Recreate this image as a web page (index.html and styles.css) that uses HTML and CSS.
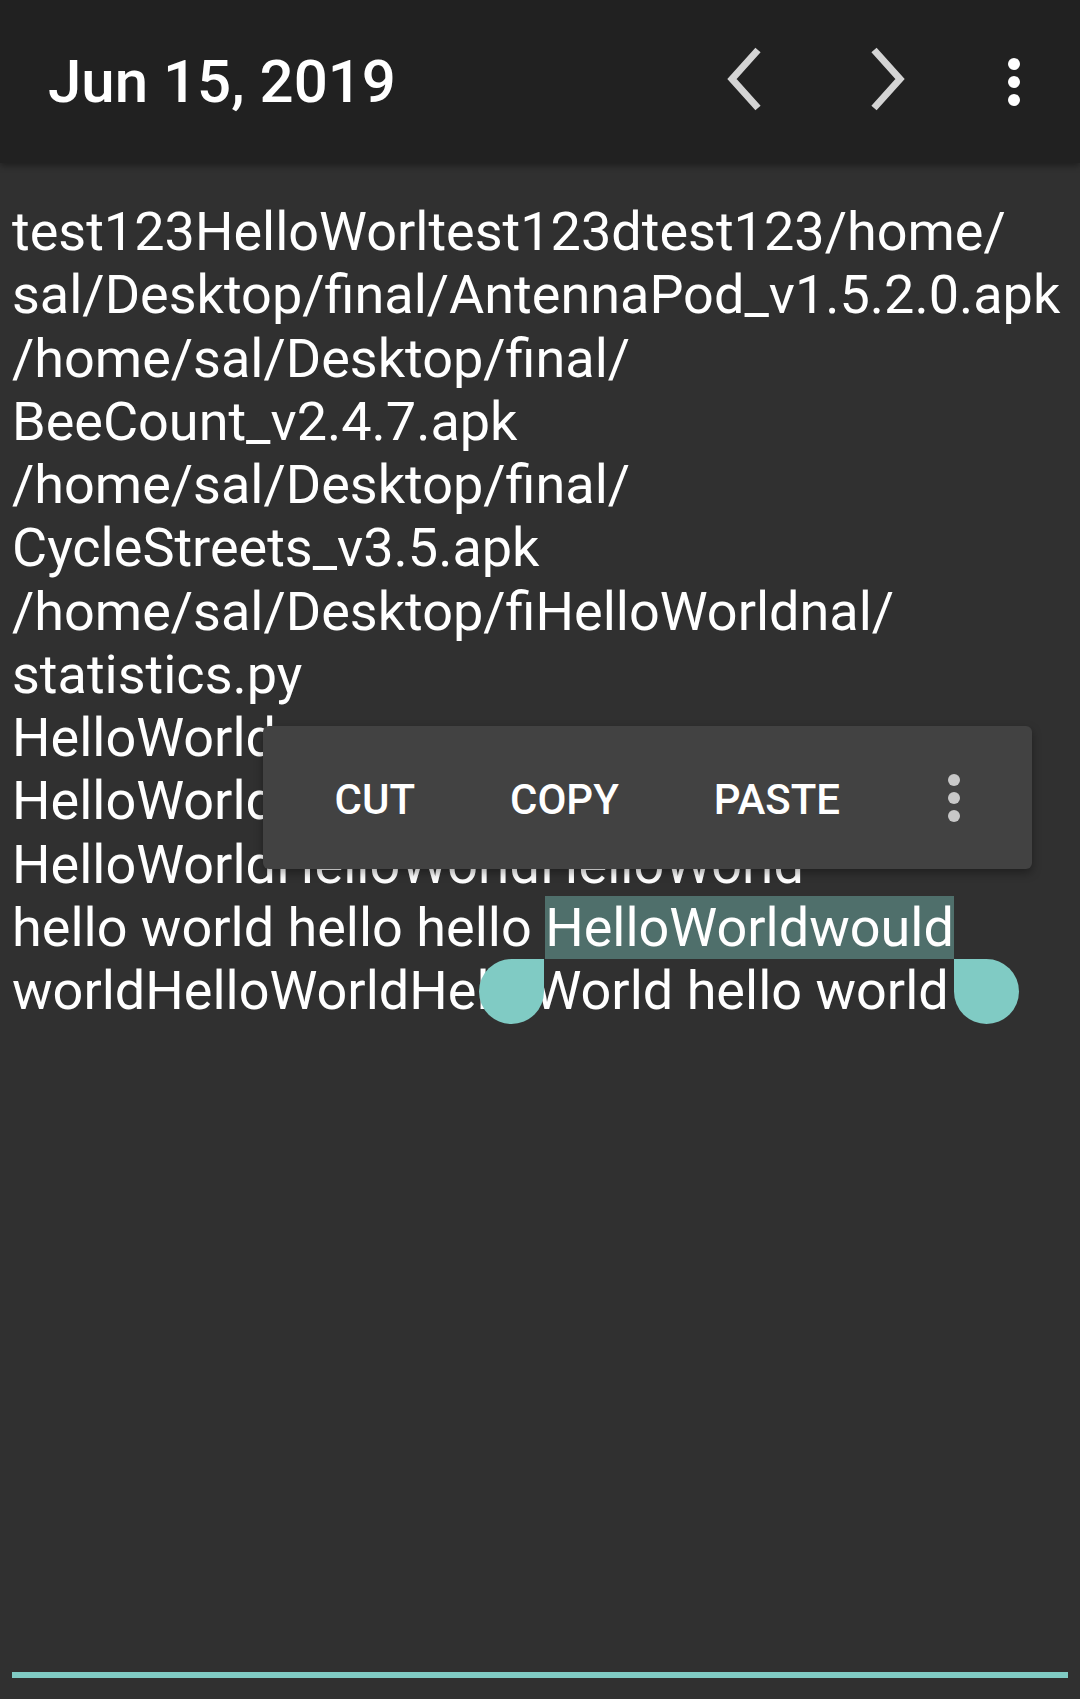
FILE: index.html
```html
<!DOCTYPE html>
<html lang="en">
<head>
<meta charset="utf-8">
<title>Jun 15, 2019</title>
<link rel="stylesheet" href="styles.css">
</head>
<body>
<div class="app">
  <header class="toolbar">
    <h1 class="title">Jun 15, 2019</h1>
    <div class="actions">
      <button class="action" aria-label="Previous">
        <svg class="chevron" width="40" height="66" viewBox="0 0 40 66"><polyline points="34,4 8,33 34,62" fill="none" stroke="#d4d4d4" stroke-width="7" stroke-linejoin="miter"/></svg>
      </button>
      <button class="action" aria-label="Next">
        <svg class="chevron" width="40" height="66" viewBox="0 0 40 66"><polyline points="6,4 32,33 6,62" fill="none" stroke="#d4d4d4" stroke-width="7" stroke-linejoin="miter"/></svg>
      </button>
      <button class="action action-overflow" aria-label="More options">
        <svg width="12" height="48" viewBox="0 0 12 48"><circle cx="6" cy="6" r="6" fill="#fff"/><circle cx="6" cy="24" r="6" fill="#fff"/><circle cx="6" cy="42" r="6" fill="#fff"/></svg>
      </button>
    </div>
  </header>
  <main class="content">
    <div class="editor">
      <div class="line">test123HelloWorltest123dtest123/home/</div>
      <div class="line">sal/Desktop/final/AntennaPod_v1.5.2.0.apk</div>
      <div class="line">/home/sal/Desktop/final/</div>
      <div class="line">BeeCount_v2.4.7.apk</div>
      <div class="line">/home/sal/Desktop/final/</div>
      <div class="line">CycleStreets_v3.5.apk</div>
      <div class="line">/home/sal/Desktop/fiHelloWorldnal/</div>
      <div class="line">statistics.py</div>
      <div class="line">HelloWorld</div>
      <div class="line">HelloWorld</div>
      <div class="line">HelloWorldHelloWorldHelloWorld</div>
      <div class="line">hello world hello hello <span class="selection">HelloWorldwould<span class="handle handle-start"></span><span class="handle handle-end"></span></span></div>
      <div class="line">worldHelloWorldHelloWorld hello world</div>
    </div>
    <div class="popup">
      <span class="popup-item">CUT</span>
      <span class="popup-item">COPY</span>
      <span class="popup-item">PASTE</span>
      <span class="popup-more">
        <svg width="12" height="48" viewBox="0 0 12 48"><circle cx="6" cy="6" r="6" fill="#c8c8c8"/><circle cx="6" cy="24" r="6" fill="#c8c8c8"/><circle cx="6" cy="42" r="6" fill="#c8c8c8"/></svg>
      </span>
    </div>
  </main>
</div>
</body>
</html>
```
FILE: styles.css
```css
html, body {
  margin: 0;
  padding: 0;
  background: #303030;
}

.app {
  width: 1080px;
  height: 1699px;
  display: flex;
  flex-direction: column;
  overflow: hidden;
  font-family: Roboto, "Noto Sans", "Liberation Sans", sans-serif;
  color: #fff;
}

.toolbar {
  height: 163px;
  flex: 0 0 163px;
  background: #212121;
  display: flex;
  align-items: center;
  padding: 0 12px 0 48px;
  box-sizing: border-box;
  box-shadow: 0 3px 6px rgba(0, 0, 0, 0.35);
  position: relative;
  z-index: 2;
}

.title {
  flex: 1;
  margin: 0;
  font-size: 60px;
  font-weight: 500;
  line-height: normal;
  color: #fff;
}

.actions {
  display: flex;
  align-items: center;
  height: 100%;
}

.action {
  width: 144px;
  height: 163px;
  border: 0;
  padding: 0;
  background: transparent;
  display: flex;
  align-items: center;
  justify-content: center;
}

.chevron {
  margin-top: -5px;
}

.action-overflow {
  width: 108px;
}

.content {
  flex: 1;
  position: relative;
  display: flex;
  flex-direction: column;
  padding: 37px 12px 21px 12px;
  box-sizing: border-box;
}

.editor {
  flex: 1;
  border-bottom: 6px solid #80cbc4;
  font-size: 54px;
  line-height: 63.28px;
  white-space: nowrap;
}

.line {
  height: 63.28px;
}

.selection {
  position: relative;
  background: #4f6f6b;
}

.handle {
  position: absolute;
  top: 100%;
  width: 65px;
  height: 65px;
  background: #80cbc4;
}

.handle-start {
  left: -66px;
  border-radius: 50% 0 50% 50%;
}

.handle-end {
  left: 100%;
  border-radius: 0 50% 50% 50%;
}

.popup {
  position: absolute;
  left: 263px;
  top: 563px;
  width: 769px;
  height: 143px;
  background: #424242;
  border-radius: 6px;
  box-shadow: 0 4px 10px rgba(0, 0, 0, 0.35);
  display: flex;
  align-items: center;
  padding-left: 24px;
  padding-top: 4px;
  box-sizing: border-box;
}

.popup-item {
  padding: 0 47.5px;
  font-size: 42px;
  font-weight: 500;
  color: #fff;
  line-height: 1;
}

.popup-more {
  display: flex;
  align-items: center;
  justify-content: center;
  width: 72px;
  margin-left: 30px;
  margin-top: -4px;
}
```
